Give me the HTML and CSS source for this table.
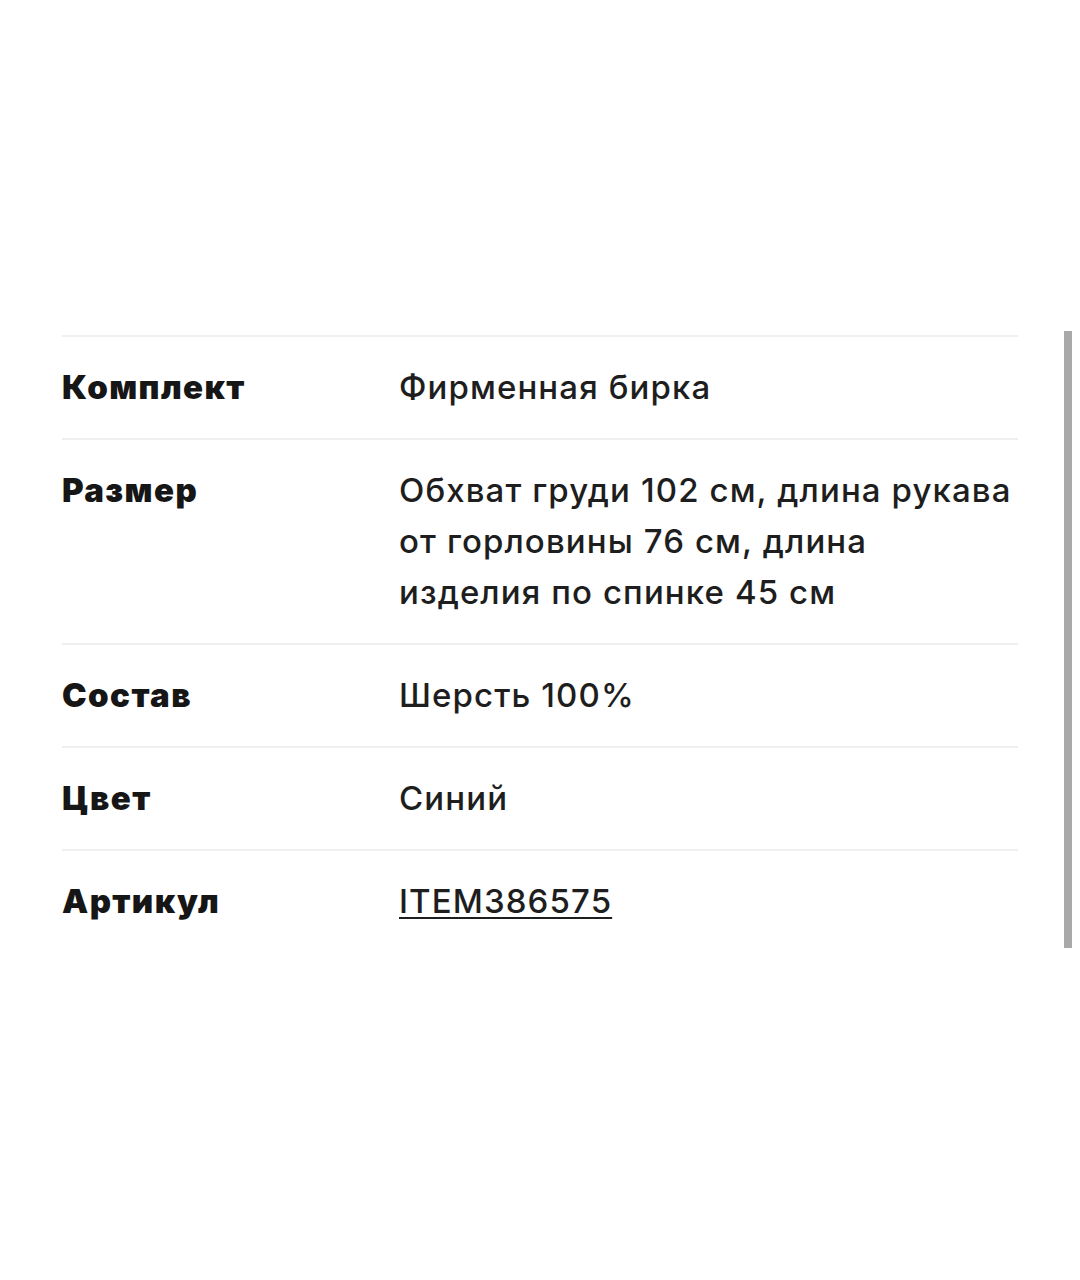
FILE: index.html
```html
<!DOCTYPE html>
<html lang="ru">
<head>
<meta charset="utf-8">
<link rel="stylesheet" href="styles.css">
</head>
<body>
<div class="panel">
  <div class="specs">
    <div class="row">
      <div class="label">Комплект</div>
      <div class="value">Фирменная бирка</div>
    </div>
    <div class="row">
      <div class="label">Размер</div>
      <div class="value">Обхват груди 102 см, длина рукава от горловины 76 см, длина изделия по спинке 45 см</div>
    </div>
    <div class="row">
      <div class="label">Состав</div>
      <div class="value">Шерсть 100%</div>
    </div>
    <div class="row">
      <div class="label">Цвет</div>
      <div class="value">Синий</div>
    </div>
    <div class="row">
      <div class="label">Артикул</div>
      <div class="value"><a class="link" href="#">ITEM386575</a></div>
    </div>
  </div>
  <div class="scrollbar"></div>
</div>
</body>
</html>
```

FILE: styles.css
```css
html, body {
  margin: 0;
  padding: 0;
  background: #ffffff;
}
body {
  width: 1080px;
  height: 1280px;
  font-family: Inter, "Liberation Sans", Arial, sans-serif;
  color: #1c1c1c;
}
.panel {
  position: relative;
  padding-top: 335px;
}
.specs {
  margin: 0 62px;
  display: flex;
  flex-direction: column;
}
.row {
  display: grid;
  grid-template-columns: 337px 1fr;
  border-top: 2px solid #efefef;
  padding: 25px 0 25px;
}
.label {
  font-size: 33px;
  font-weight: 900;
  line-height: 51px;
  color: #161616;
  letter-spacing: 1.4px;
}
.value {
  font-size: 33px;
  font-weight: 500;
  line-height: 51px;
  color: #1e1e1e;
  letter-spacing: 1.1px;
}
.link {
  color: #1e1e1e;
  text-decoration: underline;
  text-decoration-thickness: 2px;
  text-underline-offset: 4px;
}
.scrollbar {
  position: absolute;
  left: 1064px;
  top: 331px;
  width: 8px;
  height: 617px;
  background: #a9a9a9;
}
```
